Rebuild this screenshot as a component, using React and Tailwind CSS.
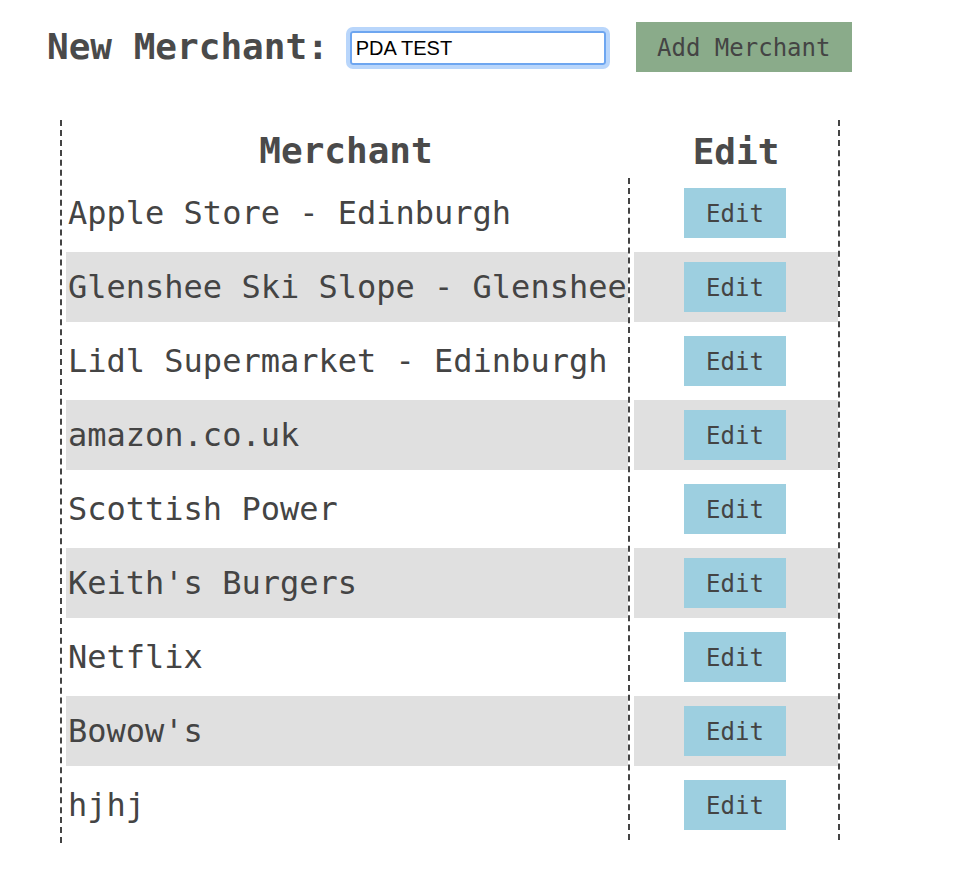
import { useState } from 'react'

const MERCHANTS = [
  'Apple Store - Edinburgh',
  'Glenshee Ski Slope - Glenshee',
  'Lidl Supermarket - Edinburgh',
  'amazon.co.uk',
  'Scottish Power',
  "Keith's Burgers",
  'Netflix',
  "Bowow's",
  'hjhj',
]

const mono = { fontFamily: '"DejaVu Sans Mono", "Liberation Mono", monospace' }

export default function App() {
  const [name, setName] = useState('PDA TEST')

  return (
    <div className="min-h-screen bg-white text-[#444]" style={mono}>
      <div className="flex items-center h-[50px] mt-[22px] pl-[47px]">
        <span className="text-[36px] font-semibold leading-none text-[#4a4a4a]">New Merchant:</span>
        <input
          type="text"
          value={name}
          onChange={(e) => setName(e.target.value)}
          className="ml-[21px] mt-[2px] w-[256px] h-[34px] px-[4px] border-2 border-[#6ea6f0] ring-4 ring-[#b9d6fb] rounded-[3px] outline-none text-[20px] text-black"
          style={{ fontFamily: '"Liberation Sans", Arial, sans-serif' }}
        />
        <button className="ml-[30px] w-[216px] h-[50px] bg-[#8aab8a] text-[24px] text-[#444] leading-none pt-[2px]">
          Add Merchant
        </button>
      </div>

      <div className="ml-[60px] mt-[48px] w-fit flex border-l-2 border-dashed border-[#444] pb-[3px]">
        <div className="flex flex-col">
          <div className="h-[58px] pt-[4px] flex items-center justify-center text-[36px] font-bold leading-none text-[#4a4a4a]">
            Merchant
          </div>
          <div className="flex flex-col gap-[4px] pl-[4px] border-r-2 border-dashed border-[#444]">
            {MERCHANTS.map((m, i) => (
              <div
                key={m}
                className={`w-[562px] h-[70px] flex items-center pl-[2px] text-[32px] leading-none whitespace-nowrap ${i % 2 === 1 ? 'bg-[#e0e0e0]' : ''}`}
              >
                {m}
              </div>
            ))}
          </div>
        </div>
        <div className="flex flex-col pt-[4px] pl-[4px] border-r-2 border-dashed border-[#444] self-start">
          <div className="h-[54px] pt-[2px] flex items-center justify-center text-[36px] font-bold leading-none text-[#4a4a4a]">
            Edit
          </div>
          <div className="flex flex-col gap-[4px]">
            {MERCHANTS.map((m, i) => (
              <div
                key={m}
                className={`w-[204px] h-[70px] flex items-center justify-center pr-[2px] ${i % 2 === 1 ? 'bg-[#e0e0e0]' : ''}`}
              >
                <button className="w-[102px] h-[50px] pt-[2px] bg-[#9dcfe0] text-[24px] text-[#444] leading-none">
                  Edit
                </button>
              </div>
            ))}
          </div>
        </div>
      </div>
    </div>
  )
}
